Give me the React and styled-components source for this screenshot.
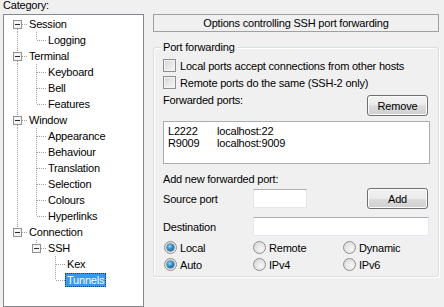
import React from "react";
import styled, { createGlobalStyle } from "styled-components";

const GlobalStyle = createGlobalStyle`
  html, body {
    margin: 0;
    padding: 0;
    background: #f0f0f0;
    overflow: hidden;
  }
  body {
    font-family: "Liberation Sans", Arial, sans-serif;
    font-size: 11px;
    letter-spacing: -0.2px;
    color: #000;
  }
`;

const Window = styled.div`
  width: 444px;
  height: 307px;
  display: flex;
  background: #f0f0f0;
  overflow: hidden;
`;

const LeftColumn = styled.div`
  width: 141px;
  padding-left: 3px;
  display: flex;
  flex-direction: column;
`;

const CategoryLabel = styled.div`
  height: 14px;
  line-height: 10px;
`;

const TreeBox = styled.div`
  height: 300px;
  border: 1px solid #828790;
  background: #fff;
  padding: 1px 0 0 4px;
  box-sizing: border-box;
`;

const TreeRow = styled.div`
  height: 16px;
  display: flex;
  align-items: center;
`;

const Cell = styled.svg`
  width: 19px;
  height: 16px;
  flex: none;
  display: block;
`;

const NodeLabel = styled.span`
  height: 14px;
  line-height: 14px;
  padding: 0 2px;
  white-space: nowrap;
  color: ${(p) => (p.$selected ? "#fff" : "#000")};
  background: ${(p) => (p.$selected ? "#3399ff" : "transparent")};
  outline: ${(p) => (p.$selected ? "1px dotted #1a3a60" : "none")};
  outline-offset: -1px;
`;

const RightColumn = styled.div`
  width: 286px;
  margin-left: 9px;
  padding-top: 14px;
  display: flex;
  flex-direction: column;
`;

const Header = styled.div`
  height: 18px;
  box-sizing: border-box;
  border: 1px solid #a0a0a0;
  line-height: 16px;
  text-align: center;
`;

const Group = styled.div`
  position: relative;
  margin-top: 15px;
  width: 286px;
  height: 230px;
  box-sizing: border-box;
  border: 1px solid #d5dfe5;
  border-radius: 3px;
  box-shadow: inset 1px 1px 0 #fff, 1px 1px 0 #fff;
  padding: 9px 8px 0 9px;
  display: flex;
  flex-direction: column;
`;

const Legend = styled.span`
  position: absolute;
  top: -8px;
  left: 7px;
  padding: 0 2px;
  line-height: 14px;
  background: #f0f0f0;
`;

const CheckRow = styled.label`
  height: 17px;
  display: flex;
  align-items: center;
  gap: 4px;
`;

const CheckBox = styled.span`
  width: 13px;
  height: 13px;
  box-sizing: border-box;
  border: 1px solid #8f8f8f;
  background: linear-gradient(135deg, #d6d6d6, #f7f7f7);
  box-shadow: inset 0 0 0 1px #f4f4f4;
  flex: none;
`;

const HeadRow = styled.div`
  margin-top: 2px;
  height: 23px;
  display: flex;
  justify-content: space-between;
  align-items: flex-start;
`;

const Text = styled.span`
  line-height: 14px;
  white-space: nowrap;
`;

const Button = styled.button`
  width: 61px;
  height: ${(p) => p.$h || 21}px;
  margin: ${(p) => p.$mt || 0}px 2px 0 0;
  padding: 0;
  font: inherit;
  letter-spacing: inherit;
  color: #000;
  border: 1px solid #707070;
  border-radius: 3px;
  background: linear-gradient(#f2f2f2 0%, #ebebeb 50%, #dddddd 50%, #cfcfcf 100%);
  box-shadow: inset 0 0 0 1px #fbfbfb;
`;

const ListBox = styled.div`
  margin-top: 5px;
  height: 43px;
  box-sizing: border-box;
  border: 1px solid #abadb3;
  background: #fff;
  padding: 3px 0 0 4px;
`;

const ListItem = styled.div`
  height: 12px;
  line-height: 12px;
  display: grid;
  grid-template-columns: 49px auto;
`;

const SubTitle = styled(Text)`
  margin-top: 8px;
  display: block;
`;

const FieldRow = styled.div`
  margin-top: ${(p) => p.$mt || 0}px;
  height: ${(p) => p.$h || 19}px;
  display: flex;
  align-items: center;
`;

const FieldLabel = styled.span`
  width: 90px;
  flex: none;
  white-space: nowrap;
`;

const Input = styled.div`
  width: ${(p) => p.$w}px;
  height: 19px;
  box-sizing: border-box;
  border: 1px solid #e3e9ef;
  border-top-color: #abadb3;
  background: #fff;
`;

const Spacer = styled.div`
  flex: 1;
`;

const RadioGrid = styled.div`
  margin-top: 3px;
  display: grid;
  grid-template-columns: 89px 90px auto;
  grid-auto-rows: 17px;
  padding-left: 1px;
`;

const RadioItem = styled.label`
  display: flex;
  align-items: center;
  gap: 3px;
`;

const RadioCircle = styled.span`
  width: 13px;
  height: 13px;
  box-sizing: border-box;
  border-radius: 50%;
  border: 1px solid #8f8f8f;
  background: radial-gradient(circle at 65% 65%, #f6f6f6, #d4d4d4);
  display: flex;
  align-items: center;
  justify-content: center;
  flex: none;
`;

const RadioDot = styled.span`
  width: 7px;
  height: 7px;
  border-radius: 50%;
  background: radial-gradient(circle at 40% 35%, #8fe0ff 0%, #2a8cc4 45%, #0f4a70 100%);
  box-shadow: 0 0 0 0.5px #1d4f72;
`;

const tree = [
  { label: "Session", children: [{ label: "Logging" }] },
  {
    label: "Terminal",
    children: [{ label: "Keyboard" }, { label: "Bell" }, { label: "Features" }],
  },
  {
    label: "Window",
    children: [
      { label: "Appearance" },
      { label: "Behaviour" },
      { label: "Translation" },
      { label: "Selection" },
      { label: "Colours" },
      { label: "Hyperlinks" },
    ],
  },
  {
    label: "Connection",
    children: [
      {
        label: "SSH",
        children: [{ label: "Kex" }, { label: "Tunnels", selected: true }],
      },
    ],
  },
];

function flatten(nodes, depth, guides, out) {
  nodes.forEach((n, i) => {
    out.push({
      ...n,
      depth,
      guides,
      top: !(depth === 0 && i === 0),
      bottom: i < nodes.length - 1,
    });
    if (n.children) {
      flatten(n.children, depth + 1, [...guides, i < nodes.length - 1], out);
    }
  });
  return out;
}

const dot = { stroke: "#a0a0a0", strokeDasharray: "1 1", shapeRendering: "crispEdges" };

const GuideCell = ({ on }) => (
  <Cell viewBox="0 0 19 16">
    {on && <line x1="9.5" y1="0" x2="9.5" y2="16" {...dot} />}
  </Cell>
);

const NodeCell = ({ top, bottom, expander }) => (
  <Cell viewBox="0 0 19 16">
    {top && <line x1="9.5" y1="0" x2="9.5" y2={expander ? 4 : 8} {...dot} />}
    {bottom && <line x1="9.5" y1={expander ? 13 : 8} x2="9.5" y2="16" {...dot} />}
    <line x1={expander ? 14 : 10} y1="8.5" x2="19" y2="8.5" {...dot} />
    {expander && (
      <g shapeRendering="crispEdges">
        <rect x="5.5" y="4.5" width="8" height="8" fill="#f3f3f3" stroke="#919191" />
        <line x1="7" y1="8.5" x2="12" y2="8.5" stroke="#2b2b2b" />
      </g>
    )}
  </Cell>
);

const rows = flatten(tree, 0, [], []);

const Radio = ({ label, checked }) => (
  <RadioItem>
    <RadioCircle>{checked && <RadioDot />}</RadioCircle>
    <Text>{label}</Text>
  </RadioItem>
);

export default function App() {
  return (
    <Window>
      <GlobalStyle />
      <LeftColumn>
        <CategoryLabel>Category:</CategoryLabel>
        <TreeBox>
          {rows.map((r) => (
            <TreeRow key={r.label}>
              {r.guides.map((g, i) => (
                <GuideCell key={i} on={g} />
              ))}
              <NodeCell top={r.top} bottom={r.bottom} expander={!!r.children} />
              <NodeLabel $selected={r.selected}>{r.label}</NodeLabel>
            </TreeRow>
          ))}
        </TreeBox>
      </LeftColumn>

      <RightColumn>
        <Header>Options controlling SSH port forwarding</Header>
        <Group>
          <Legend>Port forwarding</Legend>
          <CheckRow>
            <CheckBox />
            <Text>Local ports accept connections from other hosts</Text>
          </CheckRow>
          <CheckRow>
            <CheckBox />
            <Text>Remote ports do the same (SSH-2 only)</Text>
          </CheckRow>
          <HeadRow>
            <Text>Forwarded ports:</Text>
            <Button $mt={2} $h={21}>Remove</Button>
          </HeadRow>
          <ListBox>
            <ListItem>
              <span>L2222</span>
              <span>localhost:22</span>
            </ListItem>
            <ListItem>
              <span>R9009</span>
              <span>localhost:9009</span>
            </ListItem>
          </ListBox>
          <SubTitle>Add new forwarded port:</SubTitle>
          <FieldRow $mt={2} $h={21}>
            <FieldLabel>Source port</FieldLabel>
            <Input $w={54} />
            <Spacer />
            <Button>Add</Button>
          </FieldRow>
          <FieldRow $mt={8}>
            <FieldLabel>Destination</FieldLabel>
            <Input $w={176} />
          </FieldRow>
          <RadioGrid>
            <Radio label="Local" checked />
            <Radio label="Remote" />
            <Radio label="Dynamic" />
            <Radio label="Auto" checked />
            <Radio label="IPv4" />
            <Radio label="IPv6" />
          </RadioGrid>
        </Group>
      </RightColumn>
    </Window>
  );
}
